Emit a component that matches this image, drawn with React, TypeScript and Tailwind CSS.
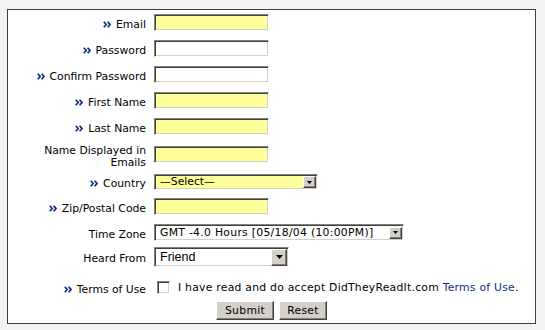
import React from "react";

const FONT = { fontFamily: '"DejaVu Sans", Verdana, sans-serif' };

const inset =
  "border border-t-[#808080] border-l-[#808080] border-b-white border-r-white shadow-[inset_1px_1px_0_#404040,inset_-1px_-1px_0_#d4d0c8]";
const raised =
  "border border-t-white border-l-white border-b-[#404040] border-r-[#404040] shadow-[inset_-1px_-1px_0_#808080]";

function Arrow() {
  return (
    <svg width="8" height="7" viewBox="0 0 8 7" className="inline-block mr-[5px] align-[0px]">
      <path d="M0.8,0.8 L3.2,3.5 L0.8,6.2 M4.6,0.8 L7,3.5 L4.6,6.2" fill="none" stroke="#0b2f7e" strokeWidth="1.7" />
    </svg>
  );
}

function Label({ req, children }: { req?: boolean; children: React.ReactNode }) {
  return (
    <div className="w-[139px] shrink-0 text-right pr-[1px] pt-[4px] leading-[12px]">
      {req && <Arrow />}
      {children}
    </div>
  );
}

function TextBox({ yellow }: { yellow?: boolean }) {
  return <div className={`w-[115px] h-[17px] ${inset} ${yellow ? "bg-[#ffff99]" : "bg-white"}`} />;
}

function DropBtn({ big }: { big?: boolean }) {
  return (
    <div
      className={`${raised} bg-[#d4d0c8] flex items-center justify-center ${
        big ? "w-[16px] h-[17px]" : "w-[13px] h-[12px]"
      }`}
    >
      <svg width={big ? 7 : 5} height={big ? 4 : 3} viewBox={big ? "0 0 7 4" : "0 0 5 3"}>
        <polygon points={big ? "0,0 7,0 3.5,4" : "0,0 5,0 2.5,3"} fill="#000" />
      </svg>
    </div>
  );
}

export default function App() {
  return (
    <div className="w-[545px] h-[330px] bg-[#f3f3f3] pt-[9px] pl-[7px]" style={FONT}>
      <div className="w-[529px] h-[315px] bg-white border border-[#404040] text-[10.8px] text-black pt-[4px]">
        {[
          ["Email", true, true],
          ["Password", true, false],
          ["Confirm Password", true, false],
          ["First Name", true, true],
        ].map(([l, r, y]) => (
          <div key={l as string} className="flex gap-[7px] h-[26px]">
            <div className="h-[17px] flex items-center">
              <Label req={r as boolean}>{l as string}</Label>
            </div>
            <TextBox yellow={y as boolean} />
          </div>
        ))}
        <div className="flex gap-[7px] h-[28px]">
          <div className="h-[17px] flex items-center">
            <Label req>Last Name</Label>
          </div>
          <TextBox yellow />
        </div>
        <div className="flex gap-[7px] h-[28px]">
          <div className="w-[139px] shrink-0 text-right leading-[12px] -mt-[1px] pr-[1px]">
            Name Displayed in
            <br />
            Emails
          </div>
          <TextBox yellow />
        </div>
        <div className="flex gap-[7px] h-[24px]">
          <div className="h-[16px] flex items-center">
            <Label req>Country</Label>
          </div>
          <div className={`w-[164px] h-[16px] ${inset} bg-[#ffff99] flex items-center justify-between pl-[5px] pr-[1px]`}>
            <span className="leading-[12px]">—Select—</span>
            <DropBtn />
          </div>
        </div>
        <div className="flex gap-[7px] h-[26px]">
          <div className="h-[17px] flex items-center">
            <Label req>Zip/Postal Code</Label>
          </div>
          <TextBox yellow />
        </div>
        <div className="flex gap-[7px] h-[23px]">
          <div className="h-[17px] flex items-center">
            <Label>Time Zone</Label>
          </div>
          <div className={`w-[250px] h-[17px] ${inset} bg-white flex items-center justify-between pl-[5px] pr-[1px]`}>
            <span className="leading-[12px] whitespace-nowrap tracking-[0.3px]">GMT -4.0 Hours [05/18/04 (10:00PM)]</span>
            <DropBtn />
          </div>
        </div>
        <div className="flex gap-[7px] h-[34px]">
          <div className="h-[20px] flex items-center">
            <Label>Heard From</Label>
          </div>
          <div className={`w-[135px] h-[20px] ${inset} bg-white flex items-center justify-between pl-[5px] pr-[1px]`}>
            <span
              className="text-[12.5px] leading-[14px]"
              style={{ fontFamily: '"Liberation Sans", Arial, sans-serif' }}
            >
              Friend
            </span>
            <DropBtn big />
          </div>
        </div>
        <div className="flex gap-[7px] h-[20px]">
          <div className="h-[13px] flex items-center">
            <Label req>Terms of Use</Label>
          </div>
          <div className="flex items-center h-[13px] pl-[3px] whitespace-nowrap">
            <div className={`w-[13px] h-[13px] ${inset} bg-white`} />
            <span className="ml-[8px] leading-[12px] tracking-[0.25px]">
              I have read and do accept DidTheyReadIt.com{" "}
              <span className="text-[#0b2f7e]">Terms of Use</span>.
            </span>
          </div>
        </div>
        <div className="flex justify-center gap-[5px]">
          <button className={`${raised} bg-[#d4d0c8] h-[19px] w-[58px] leading-[12px] text-black tracking-[0.3px]`} style={FONT}>
            Submit
          </button>
          <button className={`${raised} bg-[#d4d0c8] h-[19px] w-[48px] leading-[12px] text-black tracking-[0.3px]`} style={FONT}>
            Reset
          </button>
        </div>
      </div>
    </div>
  );
}
